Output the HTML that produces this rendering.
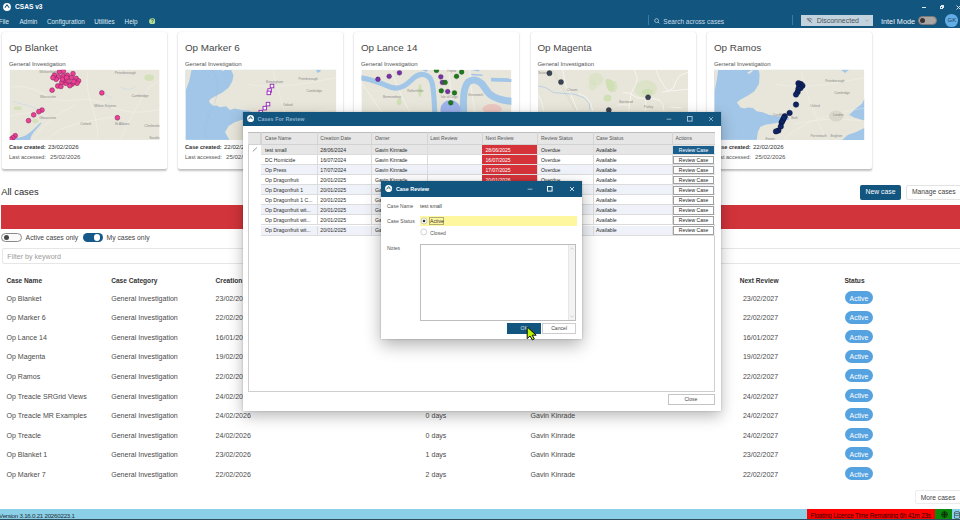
<!DOCTYPE html><html><head><meta charset="utf-8"><style>
*{box-sizing:border-box;margin:0;padding:0}
html,body{width:960px;height:520px;overflow:hidden;background:#fff;font-family:"Liberation Sans",sans-serif;color:#333}
.a{position:absolute;white-space:nowrap;line-height:1}
.b{position:absolute}
</style></head><body>
<div class="b" style="left:0;top:0;width:960px;height:28.4px;background:#12557f"></div>
<svg class="b" style="left:3px;top:3px" width="8" height="8" viewBox="0 0 10 10"><circle cx="5" cy="5" r="4.9" fill="#fff"/><path d="M2.3 5.9 L5 2.2 L7.7 5.9" fill="none" stroke="#12557f" stroke-width="1.3" stroke-linejoin="round"/></svg>
<div class="a" style="left:15.00px;top:4.31px;font-size:6.6px;color:#fff;font-weight:bold">CSAS v3</div>
<div class="a" style="left:-1.20px;top:19.02px;font-size:6.35px;color:#dfe9f0">File</div>
<div class="a" style="left:19.40px;top:19.02px;font-size:6.35px;color:#dfe9f0">Admin</div>
<div class="a" style="left:47.00px;top:19.02px;font-size:6.35px;color:#dfe9f0">Configuration</div>
<div class="a" style="left:94.20px;top:19.02px;font-size:6.35px;color:#dfe9f0">Utilities</div>
<div class="a" style="left:124.60px;top:19.02px;font-size:6.35px;color:#dfe9f0">Help</div>
<svg class="b" style="left:148.8px;top:17.8px" width="6.5" height="6.5" viewBox="0 0 10 10"><circle cx="5" cy="5" r="4.8" fill="#b6e39c"/><text x="5" y="8" font-size="8" font-weight="bold" text-anchor="middle" fill="#2e6a2e" font-family="Liberation Sans">?</text></svg>
<div class="b" style="left:921.5px;top:7px;width:4px;height:0.8px;background:#dfe9f0"></div>
<div class="b" style="left:940px;top:5.5px;width:3.2px;height:3.2px;border:0.8px solid #dfe9f0"></div><div class="b" style="left:941px;top:4.6px;width:3.2px;height:3.2px;border-top:0.8px solid #dfe9f0;border-right:0.8px solid #dfe9f0"></div>
<svg class="b" style="left:955.5px;top:4.5px" width="5" height="5" viewBox="0 0 5 5"><path d="M.5 .5L4.5 4.5M4.5 .5L.5 4.5" stroke="#dfe9f0" stroke-width=".9"/></svg>
<div class="b" style="left:648px;top:15px;width:0.7px;height:10px;background:#3d7aa3"></div>
<div class="b" style="left:792.3px;top:15px;width:0.7px;height:10px;background:#3d7aa3"></div>
<svg class="b" style="left:654px;top:18px" width="6" height="6" viewBox="0 0 6 6"><circle cx="2.6" cy="2.6" r="1.9" fill="none" stroke="#c9dbe7" stroke-width=".7"/><path d="M4 4L5.4 5.4" stroke="#c9dbe7" stroke-width=".7"/></svg>
<div class="a" style="left:663.30px;top:18.56px;font-size:6.55px;color:#c9dbe7">Search across cases</div>
<div class="b" style="left:801.3px;top:14.7px;width:71.5px;height:11.6px;background:#c3d3de"></div>
<svg class="b" style="left:805.5px;top:17px" width="7" height="7" viewBox="0 0 10 10"><path d="M1 3.5Q5 0 9 3.5M2.5 5.2Q5 3 7.5 5.2M4 7Q5 6 6 7" fill="none" stroke="#667" stroke-width="1"/><path d="M1.5 1.5L8.5 8.5" stroke="#667" stroke-width="1"/></svg>
<div class="a" style="left:816.70px;top:18.00px;font-size:6.97px;color:#4a545c">Disconnected</div>
<svg class="b" style="left:864.5px;top:19px" width="4" height="3" viewBox="0 0 4 3"><path d="M.3 .6L2 2.2L3.7 .6" fill="none" stroke="#8a98a3" stroke-width=".6"/></svg>
<div class="a" style="left:881.00px;top:18.12px;font-size:7.3px;color:#eef3f7">Intel Mode</div>
<div class="b" style="left:917.5px;top:15.8px;width:19.5px;height:9.4px;border-radius:5px;background:#aaa6a3;border:0.6px solid #7d7976"></div>
<div class="b" style="left:919.6px;top:17.5px;width:5.9px;height:5.9px;border-radius:50%;background:#3a3333"></div>
<div class="b" style="left:945.4px;top:14.1px;width:12.6px;height:12.6px;border-radius:50%;background:#62ade6"></div>
<div class="a" style="left:947.60px;top:18.21px;font-size:5.9px;color:#1d3b52">GK</div>
<div class="b" style="left:2px;top:32px;width:165px;height:136.5px;background:#fff;border-radius:2px;box-shadow:0 1.3px 2px rgba(0,0,0,.24),0 0 1px rgba(0,0,0,.12)"></div>
<div class="a" style="left:8.90px;top:42.52px;font-size:9.9px;color:#474747">Op Blanket</div>
<div class="a" style="left:8.90px;top:61.02px;font-size:6.0px;color:#555">General Investigation</div>
<div class="a" style="left:9.00px;top:144.56px;font-size:5.6px;color:#333;font-weight:bold">Case created:</div>
<div class="a" style="left:47.90px;top:144.09px;font-size:6.15px;color:#333">23/02/2026</div>
<div class="a" style="left:9.00px;top:154.60px;font-size:5.55px;color:#555">Last accessed:</div>
<div class="a" style="left:50.00px;top:154.14px;font-size:6.1px;color:#555">25/02/2026</div>
<div class="b" style="left:178px;top:32px;width:165px;height:136.5px;background:#fff;border-radius:2px;box-shadow:0 1.3px 2px rgba(0,0,0,.24),0 0 1px rgba(0,0,0,.12)"></div>
<div class="a" style="left:184.90px;top:42.52px;font-size:9.9px;color:#474747">Op Marker 6</div>
<div class="a" style="left:184.90px;top:61.02px;font-size:6.0px;color:#555">General Investigation</div>
<div class="a" style="left:185.00px;top:144.56px;font-size:5.6px;color:#333;font-weight:bold">Case created:</div>
<div class="a" style="left:223.90px;top:144.09px;font-size:6.15px;color:#333">22/02/2026</div>
<div class="a" style="left:185.00px;top:154.60px;font-size:5.55px;color:#555">Last accessed:</div>
<div class="a" style="left:226.00px;top:154.14px;font-size:6.1px;color:#555">25/02/2026</div>
<div class="b" style="left:354px;top:32px;width:165px;height:136.5px;background:#fff;border-radius:2px;box-shadow:0 1.3px 2px rgba(0,0,0,.24),0 0 1px rgba(0,0,0,.12)"></div>
<div class="a" style="left:360.90px;top:42.52px;font-size:9.9px;color:#474747">Op Lance 14</div>
<div class="a" style="left:360.90px;top:61.02px;font-size:6.0px;color:#555">General Investigation</div>
<div class="b" style="left:530.5px;top:32px;width:165px;height:136.5px;background:#fff;border-radius:2px;box-shadow:0 1.3px 2px rgba(0,0,0,.24),0 0 1px rgba(0,0,0,.12)"></div>
<div class="a" style="left:537.40px;top:42.52px;font-size:9.9px;color:#474747">Op Magenta</div>
<div class="a" style="left:537.40px;top:61.02px;font-size:6.0px;color:#555">General Investigation</div>
<div class="b" style="left:707px;top:32px;width:165px;height:136.5px;background:#fff;border-radius:2px;box-shadow:0 1.3px 2px rgba(0,0,0,.24),0 0 1px rgba(0,0,0,.12)"></div>
<div class="a" style="left:713.90px;top:42.52px;font-size:9.9px;color:#474747">Op Ramos</div>
<div class="a" style="left:713.90px;top:61.02px;font-size:6.0px;color:#555">General Investigation</div>
<div class="a" style="left:714.00px;top:144.56px;font-size:5.6px;color:#333;font-weight:bold">Case created:</div>
<div class="a" style="left:752.90px;top:144.09px;font-size:6.15px;color:#333">22/02/2026</div>
<div class="a" style="left:714.00px;top:154.60px;font-size:5.55px;color:#555">Last accessed:</div>
<div class="a" style="left:755.00px;top:154.14px;font-size:6.1px;color:#555">25/02/2026</div>
<svg class="b" style="left:8px;top:68px" width="154" height="74" viewBox="0 0 960 461"><defs><clipPath id="c8"><rect x="10" y="10" width="935" height="438"/></clipPath></defs><g clip-path="url(#c8)"><rect x="10" y="10" width="935" height="438" fill="#e8e6da"/><g fill="none" stroke="#f7f6f2" stroke-width="3" opacity=".8"><path d="M10 120 Q120 100 220 160 T420 200 T640 240 T945 260"/><path d="M500 10 Q480 120 520 230 T560 448"/><path d="M150 448 Q260 300 420 230"/><path d="M700 448 Q760 300 880 120 L945 80"/><path d="M250 448 Q300 380 420 350 T700 300"/><path d="M10 300 Q150 260 250 300"/></g><g fill="#cfe0b4" opacity=".8"><ellipse cx="170" cy="330" rx="18" ry="14"/><ellipse cx="60" cy="250" rx="25" ry="12"/><ellipse cx="880" cy="60" rx="30" ry="20"/></g><path d="M30 448 L40 440 Q90 432 115 418 Q150 395 170 372 L203 340 L208 346 L160 400 Q140 425 138 448 Z" fill="#a2c6e7"/><g fill="none" stroke="#bcd6ea" stroke-width="3"><path d="M30 210 Q120 230 200 260"/><path d="M560 120 Q600 170 650 190"/><path d="M700 120 Q760 150 800 110"/></g><g fill="#8a8a8a" font-size="22" font-family="Liberation Sans"><text x="195" y="30">Wolverhampton</text><text x="665" y="35">Peterborough</text><text x="200" y="188">Worcester</text><text x="770" y="182">Cambridge</text><text x="538" y="245">Milton Keynes</text><text x="195" y="316">Gloucester</text><text x="450" y="358">Oxford</text><text x="665" y="358">St Albans</text><text x="850" y="365">Chelmsford</text><text x="880" y="440">Southend</text></g><g fill="#ef3e98" stroke="#6a2048" stroke-width="3"><circle cx="320" cy="25" r="15"/><circle cx="345" cy="20" r="15"/><circle cx="405" cy="35" r="15"/><circle cx="290" cy="45" r="15"/><circle cx="315" cy="55" r="15"/><circle cx="345" cy="50" r="15"/><circle cx="370" cy="45" r="15"/><circle cx="395" cy="60" r="15"/><circle cx="425" cy="65" r="15"/><circle cx="440" cy="80" r="15"/><circle cx="430" cy="95" r="15"/><circle cx="400" cy="100" r="15"/><circle cx="385" cy="110" r="15"/><circle cx="360" cy="95" r="15"/><circle cx="335" cy="90" r="15"/><circle cx="310" cy="112" r="15"/><circle cx="330" cy="115" r="15"/><circle cx="355" cy="75" r="15"/><circle cx="300" cy="70" r="15"/><circle cx="375" cy="80" r="15"/><circle cx="410" cy="85" r="15"/><circle cx="340" cy="70" r="15"/><circle cx="280" cy="60" r="15"/><circle cx="365" cy="60" r="15"/><circle cx="275" cy="138" r="15"/><circle cx="585" cy="155" r="15"/><circle cx="212" cy="262" r="15"/><circle cx="192" cy="272" r="15"/><circle cx="160" cy="292" r="15"/><circle cx="128" cy="328" r="15"/><circle cx="682" cy="310" r="15"/><circle cx="45" cy="422" r="15"/><circle cx="30" cy="435" r="15"/><circle cx="15" cy="445" r="15"/></g></g></svg>
<svg class="b" style="left:183px;top:68px" width="154" height="74" viewBox="0 0 960 461"><defs><clipPath id="c183"><rect x="15" y="10" width="940" height="438"/></clipPath></defs><g clip-path="url(#c183)"><rect x="15" y="10" width="940" height="438" fill="#a2c6e7"/><path d="M299 8 L955 8 L955 448 L290 448 L262 400 L284 361 L322 338 L368 322 L420 316 L420 266 L368 261 L322 253 L292 261 L269 238 L230 245 L207 232 L192 238 L173 222 L161 207 L173 192 L207 173 L245 153 L284 123 L307 84 L315 46 Z" fill="#e8e6da"/><path d="M15 8 L54 8 L46 46 L38 84 L23 123 L15 146 Z M230 8 L261 8 L250 20 Z" fill="#e8e6da"/><path d="M830 10 L860 10 Q855 30 835 28 Z" fill="#a2c6e7"/><g fill="none" stroke="#f7f6f2" stroke-width="3" opacity=".7"><path d="M560 10 Q600 200 700 448"/><path d="M450 448 Q600 300 955 250"/><path d="M400 100 Q600 140 955 60"/></g><g fill="none" stroke="#9ab8d8" stroke-width="3" opacity=".6"><path d="M180 10 Q260 120 160 300 Q120 400 150 448"/></g><g fill="#8a8a8a" font-size="20" font-family="Liberation Sans"><text x="518" y="92">Birmingham</text><text x="720" y="74">Peterborough</text><text x="770" y="148">Cambridge</text><text x="623" y="238">Oxford</text></g><g fill="#fff" stroke="#9b2fbf" stroke-width="6"><rect x="544" y="101" width="22" height="22"/><rect x="529" y="129" width="22" height="22"/><rect x="524" y="144" width="22" height="22"/><rect x="519" y="214" width="22" height="22"/><rect x="499" y="239" width="22" height="22"/><rect x="474" y="264" width="22" height="22"/></g></g></svg>
<svg class="b" style="left:359px;top:68px" width="154" height="74" viewBox="0 0 960 461"><defs><clipPath id="c359"><rect x="15" y="10" width="935" height="438"/></clipPath></defs><g clip-path="url(#c359)"><rect x="15" y="10" width="935" height="438" fill="#e8e6da"/><g fill="none" stroke="#f7f6f2" stroke-width="4"><path d="M15 90 L260 448"/><path d="M200 10 Q260 200 420 448"/><path d="M560 10 L600 448"/><path d="M690 10 Q700 200 760 448"/></g><path d="M0 60 C60 68, 140 95, 200 120 C260 140, 300 100, 343 60 C385 25, 440 35, 455 90 C470 150, 474 250, 476 448" fill="none" stroke="#a2c6e7" stroke-width="32"/><path d="M654 448 L652 264 C648 190, 650 120, 680 88 C720 60, 760 80, 785 125 C810 170, 850 200, 960 208" fill="none" stroke="#a2c6e7" stroke-width="44"/><path d="M823 72 L960 76" fill="none" stroke="#a2c6e7" stroke-width="24"/><path d="M700 40 L770 45" fill="none" stroke="#a2c6e7" stroke-width="10"/><path d="M390 10 L430 10 L420 25 Z M700 10 L760 10 L740 22 Z" fill="#a2c6e7"/><g fill="#cfe0b4"><ellipse cx="380" cy="140" rx="12" ry="40"/><ellipse cx="250" cy="210" rx="15" ry="20"/></g><ellipse cx="570" cy="260" rx="63" ry="60" fill="#8aa6f0" opacity=".8"/><ellipse cx="830" cy="255" rx="60" ry="30" fill="#f0b4b4" opacity=".6"/><g fill="#8a8a8a" font-size="20" font-family="Liberation Sans"><text x="550" y="22">Poplar</text><text x="300" y="150">Rotherhithe</text><text x="150" y="190">Bermondsey</text><text x="510" y="188">Isle of Dogs</text><text x="680" y="175">Greenwich</text></g><g fill="#7a32a8" stroke="#3a1850" stroke-width="2"><circle cx="118" cy="70" r="15"/><circle cx="188" cy="52" r="15"/><circle cx="252" cy="30" r="15"/><circle cx="510" cy="55" r="15"/><circle cx="520" cy="90" r="15"/><circle cx="553" cy="147" r="15"/></g><g fill="#1c7a1c" stroke="#0d3d0d" stroke-width="2"><circle cx="483" cy="15" r="15"/><circle cx="640" cy="25" r="15"/><circle cx="608" cy="52" r="15"/><circle cx="537" cy="90" r="15"/><circle cx="513" cy="142" r="15"/><circle cx="595" cy="155" r="15"/><circle cx="572" cy="217" r="15"/></g></g></svg>
<svg class="b" style="left:535px;top:68px" width="154" height="74" viewBox="0 0 960 461"><defs><clipPath id="c535"><rect x="18" y="10" width="937" height="438"/></clipPath></defs><g clip-path="url(#c535)"><rect x="18" y="10" width="937" height="438" fill="#e8e6da"/><g fill="#cfe0b4"><ellipse cx="380" cy="70" rx="45" ry="40" opacity=".45"/><ellipse cx="358" cy="110" rx="25" ry="30" opacity=".4"/><path d="M440 70 Q490 60 495 110 Q500 150 470 150 Q440 130 440 70Z"/><ellipse cx="452" cy="188" rx="24" ry="21"/><ellipse cx="690" cy="130" rx="70" ry="55" opacity=".45"/><ellipse cx="700" cy="150" rx="35" ry="20"/><ellipse cx="495" cy="115" rx="18" ry="35" opacity=".6"/></g><g fill="none" stroke="#fbfaf6" stroke-width="4.5" stroke-linecap="round"><path d="M617 10 L638 63 L628 105 L601 153 L591 211 L585 264"/><path d="M754 10 L775 63 L807 116 L828 142 L860 127 L881 79 L902 47 L955 26"/><path d="M549 153 L591 158 L638 185 L691 190 L733 190 L775 200 L796 221 L802 264"/><path d="M796 148 L955 132"/><path d="M691 200 L686 264"/><path d="M517 232 L549 228 L585 232"/><path d="M849 243 L912 248"/><path d="M174 16 L190 105 L221 158 L264 264"/><path d="M21 169 L42 211 L53 264"/><path d="M274 158 L316 179 L348 221 L359 264"/></g><path d="M105 10 L253 264" fill="none" stroke="#cfcabb" stroke-width="9"/><path d="M105 10 L253 264" fill="none" stroke="#f4f2ec" stroke-width="5"/><path d="M18 111 L63 121 L116 153 L174 158 L243 163 L306 185 L338 221 L343 264" fill="none" stroke="#a6c8e6" stroke-width="4.5"/><g fill="#8a8a8a" font-size="20" font-family="Liberation Sans"><text x="20" y="40">Sutton</text><text x="200" y="145">Cheam</text><text x="525" y="218">Banstead</text><text x="680" y="252">Purley</text></g><g fill="#394456" stroke="#222" stroke-width="2"><circle cx="90" cy="32" r="16"/><circle cx="162" cy="87" r="16"/><circle cx="705" cy="182" r="16"/><circle cx="460" cy="262" r="16"/></g></g></svg>
<svg class="b" style="left:711px;top:68px" width="154" height="74" viewBox="0 0 960 461"><defs><clipPath id="c711"><rect x="20" y="10" width="935" height="438"/></clipPath></defs><g clip-path="url(#c711)"><rect x="20" y="10" width="935" height="438" fill="#a2c6e7"/><path d="M295 8 L955 8 L955 448 L285 448 L292 399 L307 368 L338 353 L399 345 L440 335 L485 322 L485 305 L440 302 L399 299 L361 292 L322 276 L284 269 L261 249 L230 246 L207 253 L184 246 L173 230 L161 215 L184 196 L223 176 L269 146 L299 100 L303 38 Z" fill="#e8e6da"/><path d="M808 9 L861 9 L835 31 Z M959 186 L941 222 L897 257 L861 293 L897 310 L959 328 Z M959 372 L906 399 L852 417 L817 448 L959 448 Z" fill="#a2c6e7"/><path d="M19 8 L46 8 L38 61 L27 123 L19 153 Z M223 31 L253 12 L262 18 L240 35 Z" fill="#e8e6da"/><g fill="none" stroke="#f7f6f2" stroke-width="3" opacity=".7"><path d="M560 10 Q600 200 720 448"/><path d="M450 448 Q600 300 955 250"/><path d="M400 100 Q600 140 955 60"/><path d="M520 350 Q700 300 955 330"/></g><ellipse cx="780" cy="300" rx="45" ry="35" fill="#d9d6cc"/><g fill="#8a8a8a" font-size="20" font-family="Liberation Sans"><text x="712" y="85">Peterborough</text><text x="768" y="160">Cambridge</text><text x="618" y="246">Oxford</text><text x="760" y="297">London</text><text x="385" y="300">Cardiff</text><text x="500" y="320">Bath</text><text x="620" y="432">Portsmouth</text><text x="745" y="430">Brighton</text><text x="340" y="447">Exeter</text></g><g fill="#0f2463" stroke="#06113a" stroke-width="3"><circle cx="545" cy="95" r="17"/><circle cx="560" cy="100" r="17"/><circle cx="570" cy="110" r="17"/><circle cx="550" cy="115" r="17"/><circle cx="558" cy="125" r="17"/><circle cx="545" cy="130" r="17"/><circle cx="540" cy="150" r="17"/><circle cx="530" cy="165" r="17"/><circle cx="530" cy="228" r="17"/><circle cx="490" cy="280" r="17"/><circle cx="460" cy="300" r="17"/><circle cx="450" cy="320" r="17"/><circle cx="440" cy="340" r="17"/><circle cx="435" cy="365" r="17"/><circle cx="420" cy="390" r="17"/><circle cx="405" cy="395" r="17"/><circle cx="445" cy="330" r="17"/><circle cx="455" cy="310" r="17"/></g></g></svg>
<div class="a" style="left:1.20px;top:187.24px;font-size:9.4px;color:#2b2b2b">All cases</div>
<div class="b" style="left:860.3px;top:184.5px;width:40.7px;height:15.3px;border-radius:2px;background:#12557f"></div>
<div class="a" style="left:865.60px;top:188.84px;font-size:6.8px;color:#fff">New case</div>
<div class="b" style="left:905.5px;top:184.5px;width:60px;height:15.3px;border-radius:2px;background:#fff;border:0.7px solid #e3e3e3"></div>
<div class="a" style="left:911.90px;top:188.90px;font-size:6.73px;color:#444">Manage cases</div>
<div class="b" style="left:1px;top:204.9px;width:960px;height:23.9px;background:#d1343a"></div>
<div class="b" style="left:1.4px;top:232.7px;width:20.2px;height:9.8px;border-radius:5px;background:#fafafa;border:0.7px solid #8a8a8a"></div>
<div class="b" style="left:3.9px;top:234.9px;width:5.6px;height:5.6px;border-radius:50%;background:#474747"></div>
<div class="a" style="left:25.60px;top:234.84px;font-size:6.8px;color:#444">Active cases only</div>
<div class="b" style="left:82.8px;top:232.7px;width:20.2px;height:9.8px;border-radius:5px;background:#15598a"></div>
<div class="b" style="left:93.6px;top:234.4px;width:6.6px;height:6.6px;border-radius:50%;background:#fff"></div>
<div class="a" style="left:106.50px;top:234.84px;font-size:6.8px;color:#444">My cases only</div>
<div class="b" style="left:1.7px;top:247.7px;width:970px;height:16.5px;background:#fff;border:0.7px solid #e6e6e6;border-radius:2px"></div>
<div class="a" style="left:7.30px;top:253.59px;font-size:7.1px;color:#9a9a9a">Filter by keyword</div>
<div class="a" style="left:6.50px;top:278.41px;font-size:6.6px;color:#333;font-weight:bold">Case Name</div>
<div class="a" style="left:111.20px;top:278.41px;font-size:6.6px;color:#333;font-weight:bold">Case Category</div>
<div class="a" style="left:215.60px;top:278.41px;font-size:6.6px;color:#333;font-weight:bold">Creation Date</div>
<div class="a" style="left:320.00px;top:278.41px;font-size:6.6px;color:#333;font-weight:bold">Last Accessed</div>
<div class="a" style="left:424.50px;top:278.41px;font-size:6.6px;color:#333;font-weight:bold">Time Since</div>
<div class="a" style="left:529.00px;top:278.41px;font-size:6.6px;color:#333;font-weight:bold">Owner</div>
<div class="a" style="left:739.70px;top:278.41px;font-size:6.6px;color:#333;font-weight:bold">Next Review</div>
<div class="a" style="left:844.40px;top:278.41px;font-size:6.6px;color:#333;font-weight:bold">Status</div>
<div class="a" style="left:6.50px;top:294.83px;font-size:7.05px;color:#4b4b4b">Op Blanket</div>
<div class="a" style="left:111.20px;top:294.83px;font-size:7.05px;color:#4b4b4b">General Investigation</div>
<div class="a" style="left:215.60px;top:294.83px;font-size:7.05px;color:#4b4b4b">23/02/2026</div>
<div class="a" style="left:425.60px;top:294.83px;font-size:7.05px;color:#4b4b4b">2 days</div>
<div class="a" style="left:530.60px;top:294.83px;font-size:7.05px;color:#4b4b4b">Gavin Kinrade</div>
<div class="a" style="left:742.90px;top:294.83px;font-size:7.05px;color:#4b4b4b">23/02/2027</div>
<div class="b" style="left:845px;top:291.00px;width:28px;height:13px;border-radius:6.5px;background:#55a2e0"></div>
<div class="a" style="left:849.60px;top:295.66px;font-size:6.9px;color:#fff">Active</div>
<div class="a" style="left:6.50px;top:314.38px;font-size:7.05px;color:#4b4b4b">Op Marker 6</div>
<div class="a" style="left:111.20px;top:314.38px;font-size:7.05px;color:#4b4b4b">General Investigation</div>
<div class="a" style="left:215.60px;top:314.38px;font-size:7.05px;color:#4b4b4b">22/02/2026</div>
<div class="a" style="left:425.60px;top:314.38px;font-size:7.05px;color:#4b4b4b">3 days</div>
<div class="a" style="left:530.60px;top:314.38px;font-size:7.05px;color:#4b4b4b">Gavin Kinrade</div>
<div class="a" style="left:742.90px;top:314.38px;font-size:7.05px;color:#4b4b4b">22/02/2027</div>
<div class="b" style="left:845px;top:310.55px;width:28px;height:13px;border-radius:6.5px;background:#55a2e0"></div>
<div class="a" style="left:849.60px;top:315.21px;font-size:6.9px;color:#fff">Active</div>
<div class="a" style="left:6.50px;top:333.93px;font-size:7.05px;color:#4b4b4b">Op Lance 14</div>
<div class="a" style="left:111.20px;top:333.93px;font-size:7.05px;color:#4b4b4b">General Investigation</div>
<div class="a" style="left:215.60px;top:333.93px;font-size:7.05px;color:#4b4b4b">16/01/2026</div>
<div class="a" style="left:425.60px;top:333.93px;font-size:7.05px;color:#4b4b4b">0 days</div>
<div class="a" style="left:530.60px;top:333.93px;font-size:7.05px;color:#4b4b4b">Gavin Kinrade</div>
<div class="a" style="left:742.90px;top:333.93px;font-size:7.05px;color:#4b4b4b">16/01/2027</div>
<div class="b" style="left:845px;top:330.10px;width:28px;height:13px;border-radius:6.5px;background:#55a2e0"></div>
<div class="a" style="left:849.60px;top:334.76px;font-size:6.9px;color:#fff">Active</div>
<div class="a" style="left:6.50px;top:353.48px;font-size:7.05px;color:#4b4b4b">Op Magenta</div>
<div class="a" style="left:111.20px;top:353.48px;font-size:7.05px;color:#4b4b4b">General Investigation</div>
<div class="a" style="left:215.60px;top:353.48px;font-size:7.05px;color:#4b4b4b">19/02/2026</div>
<div class="a" style="left:425.60px;top:353.48px;font-size:7.05px;color:#4b4b4b">6 days</div>
<div class="a" style="left:530.60px;top:353.48px;font-size:7.05px;color:#4b4b4b">Gavin Kinrade</div>
<div class="a" style="left:742.90px;top:353.48px;font-size:7.05px;color:#4b4b4b">19/02/2027</div>
<div class="b" style="left:845px;top:349.65px;width:28px;height:13px;border-radius:6.5px;background:#55a2e0"></div>
<div class="a" style="left:849.60px;top:354.31px;font-size:6.9px;color:#fff">Active</div>
<div class="a" style="left:6.50px;top:373.03px;font-size:7.05px;color:#4b4b4b">Op Ramos</div>
<div class="a" style="left:111.20px;top:373.03px;font-size:7.05px;color:#4b4b4b">General Investigation</div>
<div class="a" style="left:215.60px;top:373.03px;font-size:7.05px;color:#4b4b4b">22/02/2026</div>
<div class="a" style="left:425.60px;top:373.03px;font-size:7.05px;color:#4b4b4b">3 days</div>
<div class="a" style="left:530.60px;top:373.03px;font-size:7.05px;color:#4b4b4b">Gavin Kinrade</div>
<div class="a" style="left:742.90px;top:373.03px;font-size:7.05px;color:#4b4b4b">22/02/2027</div>
<div class="b" style="left:845px;top:369.20px;width:28px;height:13px;border-radius:6.5px;background:#55a2e0"></div>
<div class="a" style="left:849.60px;top:373.86px;font-size:6.9px;color:#fff">Active</div>
<div class="a" style="left:6.50px;top:392.58px;font-size:7.05px;color:#4b4b4b">Op Treacle SRGrid Views</div>
<div class="a" style="left:111.20px;top:392.58px;font-size:7.05px;color:#4b4b4b">General Investigation</div>
<div class="a" style="left:215.60px;top:392.58px;font-size:7.05px;color:#4b4b4b">24/02/2026</div>
<div class="a" style="left:425.60px;top:392.58px;font-size:7.05px;color:#4b4b4b">1 days</div>
<div class="a" style="left:530.60px;top:392.58px;font-size:7.05px;color:#4b4b4b">Gavin Kinrade</div>
<div class="a" style="left:742.90px;top:392.58px;font-size:7.05px;color:#4b4b4b">24/02/2027</div>
<div class="b" style="left:845px;top:388.75px;width:28px;height:13px;border-radius:6.5px;background:#55a2e0"></div>
<div class="a" style="left:849.60px;top:393.41px;font-size:6.9px;color:#fff">Active</div>
<div class="a" style="left:6.50px;top:412.13px;font-size:7.05px;color:#4b4b4b">Op Treacle MR Examples</div>
<div class="a" style="left:111.20px;top:412.13px;font-size:7.05px;color:#4b4b4b">General Investigation</div>
<div class="a" style="left:215.60px;top:412.13px;font-size:7.05px;color:#4b4b4b">24/02/2026</div>
<div class="a" style="left:425.60px;top:412.13px;font-size:7.05px;color:#4b4b4b">0 days</div>
<div class="a" style="left:530.60px;top:412.13px;font-size:7.05px;color:#4b4b4b">Gavin Kinrade</div>
<div class="a" style="left:742.90px;top:412.13px;font-size:7.05px;color:#4b4b4b">24/02/2027</div>
<div class="b" style="left:845px;top:408.30px;width:28px;height:13px;border-radius:6.5px;background:#55a2e0"></div>
<div class="a" style="left:849.60px;top:412.96px;font-size:6.9px;color:#fff">Active</div>
<div class="a" style="left:6.50px;top:431.68px;font-size:7.05px;color:#4b4b4b">Op Treacle</div>
<div class="a" style="left:111.20px;top:431.68px;font-size:7.05px;color:#4b4b4b">General Investigation</div>
<div class="a" style="left:215.60px;top:431.68px;font-size:7.05px;color:#4b4b4b">24/02/2026</div>
<div class="a" style="left:425.60px;top:431.68px;font-size:7.05px;color:#4b4b4b">0 days</div>
<div class="a" style="left:530.60px;top:431.68px;font-size:7.05px;color:#4b4b4b">Gavin Kinrade</div>
<div class="a" style="left:742.90px;top:431.68px;font-size:7.05px;color:#4b4b4b">24/02/2027</div>
<div class="b" style="left:845px;top:427.85px;width:28px;height:13px;border-radius:6.5px;background:#55a2e0"></div>
<div class="a" style="left:849.60px;top:432.51px;font-size:6.9px;color:#fff">Active</div>
<div class="a" style="left:6.50px;top:451.23px;font-size:7.05px;color:#4b4b4b">Op Blanket 1</div>
<div class="a" style="left:111.20px;top:451.23px;font-size:7.05px;color:#4b4b4b">General Investigation</div>
<div class="a" style="left:215.60px;top:451.23px;font-size:7.05px;color:#4b4b4b">23/02/2026</div>
<div class="a" style="left:425.60px;top:451.23px;font-size:7.05px;color:#4b4b4b">1 days</div>
<div class="a" style="left:530.60px;top:451.23px;font-size:7.05px;color:#4b4b4b">Gavin Kinrade</div>
<div class="a" style="left:742.90px;top:451.23px;font-size:7.05px;color:#4b4b4b">23/02/2027</div>
<div class="b" style="left:845px;top:447.40px;width:28px;height:13px;border-radius:6.5px;background:#55a2e0"></div>
<div class="a" style="left:849.60px;top:452.06px;font-size:6.9px;color:#fff">Active</div>
<div class="a" style="left:6.50px;top:470.78px;font-size:7.05px;color:#4b4b4b">Op Marker 7</div>
<div class="a" style="left:111.20px;top:470.78px;font-size:7.05px;color:#4b4b4b">General Investigation</div>
<div class="a" style="left:215.60px;top:470.78px;font-size:7.05px;color:#4b4b4b">22/02/2026</div>
<div class="a" style="left:425.60px;top:470.78px;font-size:7.05px;color:#4b4b4b">2 days</div>
<div class="a" style="left:530.60px;top:470.78px;font-size:7.05px;color:#4b4b4b">Gavin Kinrade</div>
<div class="a" style="left:742.90px;top:470.78px;font-size:7.05px;color:#4b4b4b">22/02/2027</div>
<div class="b" style="left:845px;top:466.95px;width:28px;height:13px;border-radius:6.5px;background:#55a2e0"></div>
<div class="a" style="left:849.60px;top:471.61px;font-size:6.9px;color:#fff">Active</div>
<div class="b" style="left:914.7px;top:490.3px;width:60px;height:14.1px;border-radius:2px;background:#fff;border:0.7px solid #ececec"></div>
<div class="a" style="left:920.70px;top:495.03px;font-size:6.7px;color:#444">More cases</div>
<div class="b" style="left:0;top:509.3px;width:960px;height:10.7px;background:#8bd0e7"></div>
<div class="b" style="left:0;top:519px;width:960px;height:1px;background:#2d4f5e"></div>
<div class="b" style="left:0;top:509.3px;width:960px;height:9.7px;overflow:hidden"><div class="a" style="left:-0.90px;top:3.45px;font-size:6.2px;color:#1f2d36;letter-spacing:-0.25px">Version 3.16.0.21 20260223.1</div>
</div>
<div class="b" style="left:806.8px;top:509.3px;width:128.5px;height:9.7px;background:#ff0000;overflow:hidden"><div class="a" style="left:3.80px;top:3.37px;font-size:6.3px;color:#3a0000;letter-spacing:-0.18px">Floating Licence Time Remaining 6h 41m 23s</div>
</div>
<div class="b" style="left:935.3px;top:509.3px;width:16.4px;height:9.7px;background:#0c8a0c"></div>
<svg class="b" style="left:940.5px;top:510.8px" width="7" height="7" viewBox="0 0 10 10"><circle cx="5" cy="5" r="4" fill="none" stroke="#111" stroke-width="1"/><path d="M1 5H9M5 1V9M5 1Q2 5 5 9M5 1Q8 5 5 9" fill="none" stroke="#111" stroke-width=".8"/></svg>
<svg class="b" style="left:954px;top:510.5px" width="6" height="8" viewBox="0 0 6 8"><ellipse cx="3" cy="1.5" rx="2.5" ry="1" fill="none" stroke="#333" stroke-width=".6"/><path d="M.5 1.5V7M5.5 1.5V7M.5 4Q3 5.5 5.5 4M.5 7Q3 8.5 5.5 7" fill="none" stroke="#333" stroke-width=".6"/></svg>
<div class="b" style="left:243px;top:111.5px;width:477.70000000000005px;height:299.0px;background:#fff;box-shadow:0 5px 14px rgba(0,0,0,.28),0 0 2px rgba(0,0,0,.2)"></div>
<div class="b" style="left:243px;top:111.5px;width:477.70000000000005px;height:14.9px;background:#12557f"></div>
<svg class="b" style="left:247.20000000000002px;top:115.2px" width="7.2" height="7.2" viewBox="0 0 10 10"><circle cx="5" cy="5" r="4.9" fill="#fff"/><path d="M2.3 5.9 L5 2.2 L7.7 5.9" fill="none" stroke="#12557f" stroke-width="1.3" stroke-linejoin="round"/><path d="M3.2 5.6 L5 4.6 L6.8 5.6 Z" fill="#12557f" opacity=".35"/></svg>
<div class="a" style="left:257.50px;top:116.53px;font-size:5.4px;color:#8eb0c9;font-weight:bold;letter-spacing:0.05px">Cases For Review</div>
<svg class="b" style="left:665.6px;top:115.6px" width="6" height="6" viewBox="0 0 6 6"><path d="M.6 3.2H5.4" stroke="#a3c0d6" stroke-width=".8"/></svg>
<svg class="b" style="left:687px;top:116px" width="6" height="6" viewBox="0 0 6 6"><rect x=".5" y=".5" width="4.6" height="4.6" fill="none" stroke="#a3c0d6" stroke-width="1"/></svg>
<svg class="b" style="left:707.7px;top:115.6px" width="6" height="6" viewBox="0 0 6 6"><path d="M1 1L5 5M5 1L1 5" stroke="#a3c0d6" stroke-width=".85"/></svg>
<div class="b" style="left:248.2px;top:132.1px;width:466.6px;height:259.6px;border:0.8px solid #cfcfcf;background:#fff"></div>
<div class="b" style="left:248.2px;top:132.1px;width:466.8px;height:13px;background:#e6e6e6;border-bottom:0.7px solid #d2d2d2;border-top:0.8px solid #bdbdbd"></div>
<div class="b" style="left:261.4px;top:132.1px;width:0.7px;height:13px;background:#d4d4d4"></div>
<div class="a" style="left:265.00px;top:136.07px;font-size:5.0px;color:#555">Case Name</div>
<div class="b" style="left:316.7px;top:132.1px;width:0.7px;height:13px;background:#d4d4d4"></div>
<div class="a" style="left:320.30px;top:136.07px;font-size:5.0px;color:#555">Creation Date</div>
<div class="b" style="left:371.3px;top:132.1px;width:0.7px;height:13px;background:#d4d4d4"></div>
<div class="a" style="left:374.90px;top:136.07px;font-size:5.0px;color:#555">Owner</div>
<div class="b" style="left:426.6px;top:132.1px;width:0.7px;height:13px;background:#d4d4d4"></div>
<div class="a" style="left:430.20px;top:136.07px;font-size:5.0px;color:#555">Last Review</div>
<div class="b" style="left:482px;top:132.1px;width:0.7px;height:13px;background:#d4d4d4"></div>
<div class="a" style="left:485.60px;top:136.07px;font-size:5.0px;color:#555">Next Review</div>
<div class="b" style="left:537.3px;top:132.1px;width:0.7px;height:13px;background:#d4d4d4"></div>
<div class="a" style="left:540.90px;top:136.07px;font-size:5.0px;color:#555">Review Status</div>
<div class="b" style="left:592.6px;top:132.1px;width:0.7px;height:13px;background:#d4d4d4"></div>
<div class="a" style="left:596.20px;top:136.07px;font-size:5.0px;color:#555">Case Status</div>
<div class="b" style="left:671.9px;top:132.1px;width:0.7px;height:13px;background:#d4d4d4"></div>
<div class="a" style="left:675.50px;top:136.07px;font-size:5.0px;color:#555">Actions</div>
<div class="b" style="left:261.4px;top:145.10px;width:453.6px;height:10.05px;background:#e6e6e6;border-bottom:0.7px solid #dcdcdc"></div>
<div class="b" style="left:316.7px;top:145.10px;width:0.7px;height:10.05px;background:#dcdcdc"></div>
<div class="b" style="left:371.3px;top:145.10px;width:0.7px;height:10.05px;background:#dcdcdc"></div>
<div class="b" style="left:426.6px;top:145.10px;width:0.7px;height:10.05px;background:#dcdcdc"></div>
<div class="b" style="left:482px;top:145.10px;width:0.7px;height:10.05px;background:#dcdcdc"></div>
<div class="b" style="left:537.3px;top:145.10px;width:0.7px;height:10.05px;background:#dcdcdc"></div>
<div class="b" style="left:592.6px;top:145.10px;width:0.7px;height:10.05px;background:#dcdcdc"></div>
<div class="b" style="left:671.9px;top:145.10px;width:0.7px;height:10.05px;background:#dcdcdc"></div>
<div class="b" style="left:482.4px;top:145.30px;width:54.9px;height:8.75px;background:#d5323a"></div>
<div class="a" style="left:265.00px;top:147.84px;font-size:5.15px;color:#2a2a2a">test small</div>
<div class="a" style="left:320.30px;top:147.84px;font-size:5.15px;color:#2a2a2a">28/06/2024</div>
<div class="a" style="left:374.90px;top:147.84px;font-size:5.15px;color:#2a2a2a">Gavin Kinrade</div>
<div class="a" style="left:485.60px;top:147.97px;font-size:5.0px;color:#fff">28/06/2025</div>
<div class="a" style="left:540.90px;top:147.88px;font-size:5.1px;color:#2a2a2a">Overdue</div>
<div class="a" style="left:595.90px;top:147.84px;font-size:5.15px;color:#2a2a2a">Available</div>
<div class="b" style="left:672.9px;top:145.90px;width:41.4px;height:8.45px;background:#1b5f8f"></div>
<div class="a" style="left:678.80px;top:147.97px;font-size:5.0px;color:#fff">Review Case</div>
<div class="b" style="left:261.4px;top:155.15px;width:453.6px;height:10.05px;background:#ffffff;border-bottom:0.7px solid #dcdcdc"></div>
<div class="b" style="left:316.7px;top:155.15px;width:0.7px;height:10.05px;background:#dcdcdc"></div>
<div class="b" style="left:371.3px;top:155.15px;width:0.7px;height:10.05px;background:#dcdcdc"></div>
<div class="b" style="left:426.6px;top:155.15px;width:0.7px;height:10.05px;background:#dcdcdc"></div>
<div class="b" style="left:482px;top:155.15px;width:0.7px;height:10.05px;background:#dcdcdc"></div>
<div class="b" style="left:537.3px;top:155.15px;width:0.7px;height:10.05px;background:#dcdcdc"></div>
<div class="b" style="left:592.6px;top:155.15px;width:0.7px;height:10.05px;background:#dcdcdc"></div>
<div class="b" style="left:671.9px;top:155.15px;width:0.7px;height:10.05px;background:#dcdcdc"></div>
<div class="b" style="left:482.4px;top:155.35px;width:54.9px;height:8.75px;background:#d5323a"></div>
<div class="a" style="left:265.00px;top:157.89px;font-size:5.15px;color:#2a2a2a">DC Homicide</div>
<div class="a" style="left:320.30px;top:157.89px;font-size:5.15px;color:#2a2a2a">16/07/2024</div>
<div class="a" style="left:374.90px;top:157.89px;font-size:5.15px;color:#2a2a2a">Gavin Kinrade</div>
<div class="a" style="left:485.60px;top:158.02px;font-size:5.0px;color:#fff">16/07/2025</div>
<div class="a" style="left:540.90px;top:157.93px;font-size:5.1px;color:#2a2a2a">Overdue</div>
<div class="a" style="left:595.90px;top:157.89px;font-size:5.15px;color:#2a2a2a">Available</div>
<div class="b" style="left:672.9px;top:155.95px;width:41.4px;height:8.45px;background:#fff;border:0.7px solid #a0a0a0"></div>
<div class="a" style="left:678.80px;top:158.02px;font-size:5.0px;color:#222">Review Case</div>
<div class="b" style="left:261.4px;top:165.20px;width:453.6px;height:10.05px;background:#eff2f8;border-bottom:0.7px solid #dcdcdc"></div>
<div class="b" style="left:316.7px;top:165.20px;width:0.7px;height:10.05px;background:#dcdcdc"></div>
<div class="b" style="left:371.3px;top:165.20px;width:0.7px;height:10.05px;background:#dcdcdc"></div>
<div class="b" style="left:426.6px;top:165.20px;width:0.7px;height:10.05px;background:#dcdcdc"></div>
<div class="b" style="left:482px;top:165.20px;width:0.7px;height:10.05px;background:#dcdcdc"></div>
<div class="b" style="left:537.3px;top:165.20px;width:0.7px;height:10.05px;background:#dcdcdc"></div>
<div class="b" style="left:592.6px;top:165.20px;width:0.7px;height:10.05px;background:#dcdcdc"></div>
<div class="b" style="left:671.9px;top:165.20px;width:0.7px;height:10.05px;background:#dcdcdc"></div>
<div class="b" style="left:482.4px;top:165.40px;width:54.9px;height:8.75px;background:#d5323a"></div>
<div class="a" style="left:265.00px;top:167.94px;font-size:5.15px;color:#2a2a2a">Op Press</div>
<div class="a" style="left:320.30px;top:167.94px;font-size:5.15px;color:#2a2a2a">17/07/2024</div>
<div class="a" style="left:374.90px;top:167.94px;font-size:5.15px;color:#2a2a2a">Gavin Kinrade</div>
<div class="a" style="left:485.60px;top:168.07px;font-size:5.0px;color:#fff">17/07/2025</div>
<div class="a" style="left:540.90px;top:167.98px;font-size:5.1px;color:#2a2a2a">Overdue</div>
<div class="a" style="left:595.90px;top:167.94px;font-size:5.15px;color:#2a2a2a">Available</div>
<div class="b" style="left:672.9px;top:166.00px;width:41.4px;height:8.45px;background:#fff;border:0.7px solid #a0a0a0"></div>
<div class="a" style="left:678.80px;top:168.07px;font-size:5.0px;color:#222">Review Case</div>
<div class="b" style="left:261.4px;top:175.25px;width:453.6px;height:10.05px;background:#ffffff;border-bottom:0.7px solid #dcdcdc"></div>
<div class="b" style="left:316.7px;top:175.25px;width:0.7px;height:10.05px;background:#dcdcdc"></div>
<div class="b" style="left:371.3px;top:175.25px;width:0.7px;height:10.05px;background:#dcdcdc"></div>
<div class="b" style="left:426.6px;top:175.25px;width:0.7px;height:10.05px;background:#dcdcdc"></div>
<div class="b" style="left:482px;top:175.25px;width:0.7px;height:10.05px;background:#dcdcdc"></div>
<div class="b" style="left:537.3px;top:175.25px;width:0.7px;height:10.05px;background:#dcdcdc"></div>
<div class="b" style="left:592.6px;top:175.25px;width:0.7px;height:10.05px;background:#dcdcdc"></div>
<div class="b" style="left:671.9px;top:175.25px;width:0.7px;height:10.05px;background:#dcdcdc"></div>
<div class="b" style="left:482.4px;top:175.45px;width:54.9px;height:8.75px;background:#d5323a"></div>
<div class="a" style="left:265.00px;top:177.99px;font-size:5.15px;color:#2a2a2a">Op Dragonfruit</div>
<div class="a" style="left:320.30px;top:177.99px;font-size:5.15px;color:#2a2a2a">20/01/2025</div>
<div class="a" style="left:374.90px;top:177.99px;font-size:5.15px;color:#2a2a2a">Gavin Kinrade</div>
<div class="a" style="left:485.60px;top:178.12px;font-size:5.0px;color:#fff">20/01/2026</div>
<div class="a" style="left:540.90px;top:178.03px;font-size:5.1px;color:#2a2a2a">Overdue</div>
<div class="a" style="left:595.90px;top:177.99px;font-size:5.15px;color:#2a2a2a">Available</div>
<div class="b" style="left:672.9px;top:176.05px;width:41.4px;height:8.45px;background:#fff;border:0.7px solid #a0a0a0"></div>
<div class="a" style="left:678.80px;top:178.12px;font-size:5.0px;color:#222">Review Case</div>
<div class="b" style="left:261.4px;top:185.30px;width:453.6px;height:10.05px;background:#eff2f8;border-bottom:0.7px solid #dcdcdc"></div>
<div class="b" style="left:316.7px;top:185.30px;width:0.7px;height:10.05px;background:#dcdcdc"></div>
<div class="b" style="left:371.3px;top:185.30px;width:0.7px;height:10.05px;background:#dcdcdc"></div>
<div class="b" style="left:426.6px;top:185.30px;width:0.7px;height:10.05px;background:#dcdcdc"></div>
<div class="b" style="left:482px;top:185.30px;width:0.7px;height:10.05px;background:#dcdcdc"></div>
<div class="b" style="left:537.3px;top:185.30px;width:0.7px;height:10.05px;background:#dcdcdc"></div>
<div class="b" style="left:592.6px;top:185.30px;width:0.7px;height:10.05px;background:#dcdcdc"></div>
<div class="b" style="left:671.9px;top:185.30px;width:0.7px;height:10.05px;background:#dcdcdc"></div>
<div class="b" style="left:482.4px;top:185.50px;width:54.9px;height:8.75px;background:#d5323a"></div>
<div class="a" style="left:265.00px;top:188.04px;font-size:5.15px;color:#2a2a2a">Op Dragonfruit 1</div>
<div class="a" style="left:320.30px;top:188.04px;font-size:5.15px;color:#2a2a2a">20/01/2025</div>
<div class="a" style="left:374.90px;top:188.04px;font-size:5.15px;color:#2a2a2a">Gavin Kinrade</div>
<div class="a" style="left:485.60px;top:188.17px;font-size:5.0px;color:#fff">20/01/2026</div>
<div class="a" style="left:540.90px;top:188.08px;font-size:5.1px;color:#2a2a2a">Overdue</div>
<div class="a" style="left:595.90px;top:188.04px;font-size:5.15px;color:#2a2a2a">Available</div>
<div class="b" style="left:672.9px;top:186.10px;width:41.4px;height:8.45px;background:#fff;border:0.7px solid #a0a0a0"></div>
<div class="a" style="left:678.80px;top:188.17px;font-size:5.0px;color:#222">Review Case</div>
<div class="b" style="left:261.4px;top:195.35px;width:453.6px;height:10.05px;background:#ffffff;border-bottom:0.7px solid #dcdcdc"></div>
<div class="b" style="left:316.7px;top:195.35px;width:0.7px;height:10.05px;background:#dcdcdc"></div>
<div class="b" style="left:371.3px;top:195.35px;width:0.7px;height:10.05px;background:#dcdcdc"></div>
<div class="b" style="left:426.6px;top:195.35px;width:0.7px;height:10.05px;background:#dcdcdc"></div>
<div class="b" style="left:482px;top:195.35px;width:0.7px;height:10.05px;background:#dcdcdc"></div>
<div class="b" style="left:537.3px;top:195.35px;width:0.7px;height:10.05px;background:#dcdcdc"></div>
<div class="b" style="left:592.6px;top:195.35px;width:0.7px;height:10.05px;background:#dcdcdc"></div>
<div class="b" style="left:671.9px;top:195.35px;width:0.7px;height:10.05px;background:#dcdcdc"></div>
<div class="b" style="left:482.4px;top:195.55px;width:54.9px;height:8.75px;background:#d5323a"></div>
<div class="a" style="left:265.00px;top:198.09px;font-size:5.15px;color:#2a2a2a">Op Dragonfruit 1 C...</div>
<div class="a" style="left:320.30px;top:198.09px;font-size:5.15px;color:#2a2a2a">20/01/2025</div>
<div class="a" style="left:374.90px;top:198.09px;font-size:5.15px;color:#2a2a2a">Gavin Kinrade</div>
<div class="a" style="left:485.60px;top:198.22px;font-size:5.0px;color:#fff">20/01/2026</div>
<div class="a" style="left:540.90px;top:198.13px;font-size:5.1px;color:#2a2a2a">Overdue</div>
<div class="a" style="left:595.90px;top:198.09px;font-size:5.15px;color:#2a2a2a">Available</div>
<div class="b" style="left:672.9px;top:196.15px;width:41.4px;height:8.45px;background:#fff;border:0.7px solid #a0a0a0"></div>
<div class="a" style="left:678.80px;top:198.22px;font-size:5.0px;color:#222">Review Case</div>
<div class="b" style="left:261.4px;top:205.40px;width:453.6px;height:10.05px;background:#eff2f8;border-bottom:0.7px solid #dcdcdc"></div>
<div class="b" style="left:316.7px;top:205.40px;width:0.7px;height:10.05px;background:#dcdcdc"></div>
<div class="b" style="left:371.3px;top:205.40px;width:0.7px;height:10.05px;background:#dcdcdc"></div>
<div class="b" style="left:426.6px;top:205.40px;width:0.7px;height:10.05px;background:#dcdcdc"></div>
<div class="b" style="left:482px;top:205.40px;width:0.7px;height:10.05px;background:#dcdcdc"></div>
<div class="b" style="left:537.3px;top:205.40px;width:0.7px;height:10.05px;background:#dcdcdc"></div>
<div class="b" style="left:592.6px;top:205.40px;width:0.7px;height:10.05px;background:#dcdcdc"></div>
<div class="b" style="left:671.9px;top:205.40px;width:0.7px;height:10.05px;background:#dcdcdc"></div>
<div class="b" style="left:482.4px;top:205.60px;width:54.9px;height:8.75px;background:#d5323a"></div>
<div class="a" style="left:265.00px;top:208.14px;font-size:5.15px;color:#2a2a2a">Op Dragonfruit wit...</div>
<div class="a" style="left:320.30px;top:208.14px;font-size:5.15px;color:#2a2a2a">20/01/2025</div>
<div class="a" style="left:374.90px;top:208.14px;font-size:5.15px;color:#2a2a2a">Gavin Kinrade</div>
<div class="a" style="left:485.60px;top:208.27px;font-size:5.0px;color:#fff">20/01/2026</div>
<div class="a" style="left:540.90px;top:208.18px;font-size:5.1px;color:#2a2a2a">Overdue</div>
<div class="a" style="left:595.90px;top:208.14px;font-size:5.15px;color:#2a2a2a">Available</div>
<div class="b" style="left:672.9px;top:206.20px;width:41.4px;height:8.45px;background:#fff;border:0.7px solid #a0a0a0"></div>
<div class="a" style="left:678.80px;top:208.27px;font-size:5.0px;color:#222">Review Case</div>
<div class="b" style="left:261.4px;top:215.45px;width:453.6px;height:10.05px;background:#ffffff;border-bottom:0.7px solid #dcdcdc"></div>
<div class="b" style="left:316.7px;top:215.45px;width:0.7px;height:10.05px;background:#dcdcdc"></div>
<div class="b" style="left:371.3px;top:215.45px;width:0.7px;height:10.05px;background:#dcdcdc"></div>
<div class="b" style="left:426.6px;top:215.45px;width:0.7px;height:10.05px;background:#dcdcdc"></div>
<div class="b" style="left:482px;top:215.45px;width:0.7px;height:10.05px;background:#dcdcdc"></div>
<div class="b" style="left:537.3px;top:215.45px;width:0.7px;height:10.05px;background:#dcdcdc"></div>
<div class="b" style="left:592.6px;top:215.45px;width:0.7px;height:10.05px;background:#dcdcdc"></div>
<div class="b" style="left:671.9px;top:215.45px;width:0.7px;height:10.05px;background:#dcdcdc"></div>
<div class="b" style="left:482.4px;top:215.65px;width:54.9px;height:8.75px;background:#d5323a"></div>
<div class="a" style="left:265.00px;top:218.19px;font-size:5.15px;color:#2a2a2a">Op Dragonfruit wit...</div>
<div class="a" style="left:320.30px;top:218.19px;font-size:5.15px;color:#2a2a2a">20/01/2025</div>
<div class="a" style="left:374.90px;top:218.19px;font-size:5.15px;color:#2a2a2a">Gavin Kinrade</div>
<div class="a" style="left:485.60px;top:218.32px;font-size:5.0px;color:#fff">20/01/2026</div>
<div class="a" style="left:540.90px;top:218.23px;font-size:5.1px;color:#2a2a2a">Overdue</div>
<div class="a" style="left:595.90px;top:218.19px;font-size:5.15px;color:#2a2a2a">Available</div>
<div class="b" style="left:672.9px;top:216.25px;width:41.4px;height:8.45px;background:#fff;border:0.7px solid #a0a0a0"></div>
<div class="a" style="left:678.80px;top:218.32px;font-size:5.0px;color:#222">Review Case</div>
<div class="b" style="left:261.4px;top:225.50px;width:453.6px;height:10.05px;background:#eff2f8;border-bottom:0.7px solid #dcdcdc"></div>
<div class="b" style="left:316.7px;top:225.50px;width:0.7px;height:10.05px;background:#dcdcdc"></div>
<div class="b" style="left:371.3px;top:225.50px;width:0.7px;height:10.05px;background:#dcdcdc"></div>
<div class="b" style="left:426.6px;top:225.50px;width:0.7px;height:10.05px;background:#dcdcdc"></div>
<div class="b" style="left:482px;top:225.50px;width:0.7px;height:10.05px;background:#dcdcdc"></div>
<div class="b" style="left:537.3px;top:225.50px;width:0.7px;height:10.05px;background:#dcdcdc"></div>
<div class="b" style="left:592.6px;top:225.50px;width:0.7px;height:10.05px;background:#dcdcdc"></div>
<div class="b" style="left:671.9px;top:225.50px;width:0.7px;height:10.05px;background:#dcdcdc"></div>
<div class="b" style="left:482.4px;top:225.70px;width:54.9px;height:8.75px;background:#d5323a"></div>
<div class="a" style="left:265.00px;top:228.24px;font-size:5.15px;color:#2a2a2a">Op Dragonfruit wit...</div>
<div class="a" style="left:320.30px;top:228.24px;font-size:5.15px;color:#2a2a2a">20/01/2025</div>
<div class="a" style="left:374.90px;top:228.24px;font-size:5.15px;color:#2a2a2a">Gavin Kinrade</div>
<div class="a" style="left:485.60px;top:228.37px;font-size:5.0px;color:#fff">20/01/2026</div>
<div class="a" style="left:540.90px;top:228.28px;font-size:5.1px;color:#2a2a2a">Overdue</div>
<div class="a" style="left:595.90px;top:228.24px;font-size:5.15px;color:#2a2a2a">Available</div>
<div class="b" style="left:672.9px;top:226.30px;width:41.4px;height:8.45px;background:#fff;border:0.7px solid #a0a0a0"></div>
<div class="a" style="left:678.80px;top:228.37px;font-size:5.0px;color:#222">Review Case</div>
<div class="b" style="left:248.2px;top:132.1px;width:13.2px;height:13px;background:#e6e6e6;border-right:0.7px solid #d4d4d4;border-top:0.8px solid #bdbdbd;border-bottom:0.7px solid #d2d2d2"></div>
<svg class="b" style="left:252px;top:147px" width="6" height="5" viewBox="0 0 6 5"><path d="M.8 4.4L4.9 .6" stroke="#777" stroke-width=".8"/></svg>
<div class="b" style="left:668.4px;top:393.5px;width:46.2px;height:11px;background:#fff;border:0.8px solid #c4c4c4"></div>
<div class="a" style="left:684.50px;top:397.07px;font-size:5.0px;color:#444">Close</div>
<div class="b" style="left:381px;top:181.4px;width:200.79999999999995px;height:157.6px;background:#fff;box-shadow:0 6px 16px rgba(0,0,0,.3),0 0 2px rgba(0,0,0,.25)"></div>
<div class="b" style="left:381px;top:181.4px;width:200.79999999999995px;height:15.2px;background:#12557f"></div>
<svg class="b" style="left:385.4px;top:185.20000000000002px" width="7.2" height="7.2" viewBox="0 0 10 10"><circle cx="5" cy="5" r="4.9" fill="#fff"/><path d="M2.3 5.9 L5 2.2 L7.7 5.9" fill="none" stroke="#12557f" stroke-width="1.3" stroke-linejoin="round"/><path d="M3.2 5.6 L5 4.6 L6.8 5.6 Z" fill="#12557f" opacity=".35"/></svg>
<div class="a" style="left:395.90px;top:187.13px;font-size:5.4px;color:#fff;font-weight:bold">Case Review</div>
<svg class="b" style="left:526.5px;top:185.8px" width="6" height="6" viewBox="0 0 6 6"><path d="M.6 3.2H5.4" stroke="#bcd0de" stroke-width=".8"/></svg>
<svg class="b" style="left:547px;top:186px" width="6" height="6" viewBox="0 0 6 6"><rect x=".5" y=".5" width="4.6" height="4.6" fill="none" stroke="#f2f6f9" stroke-width="1"/></svg>
<svg class="b" style="left:568.8px;top:185.8px" width="6" height="6" viewBox="0 0 6 6"><path d="M1 1L5 5M5 1L1 5" stroke="#f2f6f9" stroke-width=".85"/></svg>
<div class="a" style="left:387.00px;top:203.77px;font-size:5.0px;color:#555">Case Name</div>
<div class="a" style="left:420.00px;top:203.60px;font-size:5.2px;color:#444">test small</div>
<div class="a" style="left:387.00px;top:219.38px;font-size:5.1px;color:#555">Case Status</div>
<div class="b" style="left:420px;top:216.4px;width:156.5px;height:9.4px;background:#fff7a0"></div>
<svg class="b" style="left:419px;top:216px" width="10" height="20" viewBox="0 0 10 20"><circle cx="5" cy="5" r="3" fill="#fff" stroke="#a9a9a9" stroke-width=".6"/><circle cx="5" cy="5" r="1.3" fill="#333"/><circle cx="4.8" cy="16" r="3" fill="#fff" stroke="#b5b5b5" stroke-width=".6"/></svg>
<div class="b" style="left:429.2px;top:216.7px;width:14.9px;height:8.8px;border:0.5px solid #b0ae78"></div>
<div class="a" style="left:430.00px;top:219.38px;font-size:5.1px;color:#333">Active</div>
<div class="a" style="left:430.00px;top:230.58px;font-size:5.1px;color:#555">Closed</div>
<div class="a" style="left:387.00px;top:245.67px;font-size:5.0px;color:#555">Notes</div>
<div class="b" style="left:420px;top:244px;width:155.6px;height:76.6px;background:#fff;border:0.8px solid #bdbdbd"></div>
<div class="b" style="left:567.8px;top:244.8px;width:7px;height:75px;background:#f3f3f3;border-left:0.5px solid #e6e6e6"></div>
<svg class="b" style="left:569.5px;top:247px" width="4" height="3" viewBox="0 0 4 3"><path d="M.4 2.4L2 .8L3.6 2.4" fill="none" stroke="#aaa" stroke-width=".5"/></svg>
<svg class="b" style="left:569.5px;top:315px" width="4" height="3" viewBox="0 0 4 3"><path d="M.4 .6L2 2.2L3.6 .6" fill="none" stroke="#aaa" stroke-width=".5"/></svg>
<div class="b" style="left:507.4px;top:323px;width:33.3px;height:10.5px;background:#12557f"></div>
<div class="a" style="left:520.60px;top:326.00px;font-size:5.2px;color:#dfe9f0">OK</div>
<div class="b" style="left:542.4px;top:323px;width:33.4px;height:10.5px;background:#fff;border:0.8px solid #cdcdcd"></div>
<div class="a" style="left:551.20px;top:326.08px;font-size:5.1px;color:#444">Cancel</div>
<svg class="b" style="left:525.9px;top:325.5px" width="12" height="15" viewBox="0 0 12 15"><path d="M1.2 .9 L1.2 12.6 L4 10 L6.3 13.9 L8.3 12.8 L6.2 9.2 L10.2 9.2 Z" fill="#b9f200" stroke="#111" stroke-width="1" stroke-linejoin="round"/></svg>
</body></html>
